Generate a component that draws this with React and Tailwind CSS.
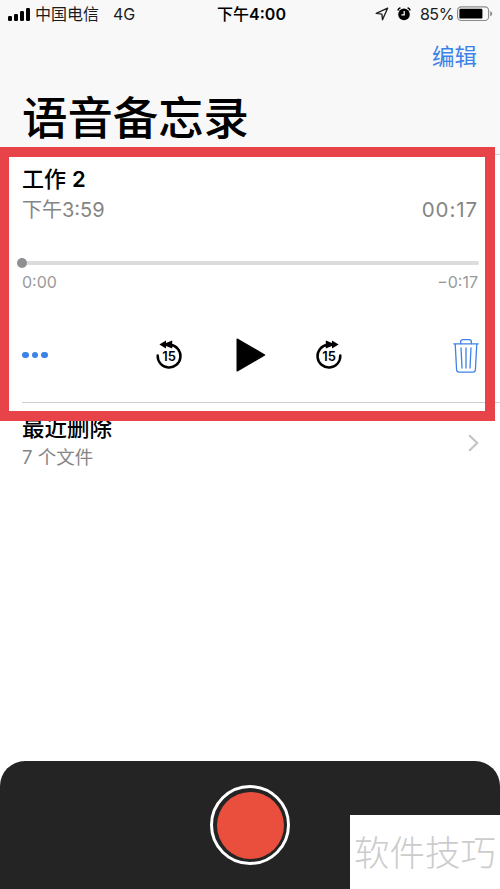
import React from 'react';

const SignalBars = () => (
  <svg width="22" height="14" viewBox="0 0 22 14" fill="#000">
    <rect x="0" y="9" width="4" height="5" rx="1.2" />
    <rect x="6" y="7" width="4" height="7" rx="1.2" />
    <rect x="12" y="4" width="4" height="10" rx="1.2" />
    <rect x="18" y="1" width="4" height="13" rx="1.2" />
  </svg>
);

const LocationIcon = () => (
  <svg width="14" height="14" viewBox="0 0 14 14" fill="none" stroke="#222" strokeWidth="1.4" strokeLinejoin="round">
    <path d="M12.6 1.2 1.2 6.4 6.9 7.1 7.5 12.8Z" />
  </svg>
);

const AlarmIcon = () => (
  <svg width="14" height="14" viewBox="0 0 14 14" fill="none">
    <circle cx="7" cy="7.4" r="5.8" fill="#000" />
    <path d="M.8 3.4A4 4 0 0 1 3.4 .8M13.2 3.4A4 4 0 0 0 10.6 .8" stroke="#000" strokeWidth="1.5" />
    <path d="M7.2 4v3.8H4.4" stroke="#fff" strokeWidth="1.2" />
  </svg>
);

const BatteryIcon = () => (
  <svg width="36" height="16" viewBox="0 0 36 16" fill="none">
    <rect x=".6" y=".9" width="31" height="13.6" rx="3.6" stroke="#8a8a8a" strokeWidth="1.1" />
    <rect x="2.4" y="2.8" width="23" height="9.8" rx="1.2" fill="#000" />
    <path d="M33.2 5.2c1.4.5 2 1.4 2 2.5s-.6 2-2 2.5Z" fill="#8a8a8a" />
  </svg>
);

const SkipIcon = ({ forward }) => (
  <svg width="32" height="32" viewBox="0 0 32 32" fill="none">
    <g transform={forward ? 'translate(32 0) scale(-1 1)' : undefined}>
      <path d="M4.7 16.6A11.4 11.4 0 1 0 17.4 5.8" stroke="#000" strokeWidth="2.5" strokeLinecap="round" />
      <path d="M6.4 5.4 13 1.4v2.5l6.2-2.5v8L13 6.9v2.5Z" fill="#000" />
    </g>
    <text x="16.2" y="21.6" textAnchor="middle" fontSize="13" fontWeight="600" fill="#000">15</text>
  </svg>
);

const PlayIcon = () => (
  <svg width="30" height="34" viewBox="0 0 30 34">
    <path d="M1.2 1.2 28.6 17 1.2 32.8Z" fill="#000" stroke="#000" strokeWidth="1.4" strokeLinejoin="round" />
  </svg>
);

const TrashIcon = () => (
  <svg width="26" height="36" viewBox="0 0 26 36" fill="none" stroke="#3d82e6" strokeWidth="1.3" strokeLinecap="round">
    <path d="M.8 5.8h24.4M2.2 5.8 3.6 31.8c.1 1.6 1 2.4 2.4 2.4h14c1.4 0 2.3-.8 2.4-2.4L23.8 5.8" />
    <path d="M7.6 5.6V4c0-1.5.9-2.3 2.3-2.3h6.2c1.4 0 2.3.8 2.3 2.3v1.6" />
    <path d="M8 9.8 9 30M13 9.8V30M18 9.8 17 30" />
  </svg>
);

const StatusBar = () => (
  <div className="flex h-7 items-center text-base text-[#1c1c1c]">
    <div className="flex flex-1 items-center pl-2">
      <SignalBars />
      <span className="ml-[5px]">中国电信</span>
      <span className="ml-[14px]">4G</span>
    </div>
    <span className="ml-0.5 font-medium text-black">下午<span className="font-semibold">4:00</span></span>
    <div className="flex flex-1 items-center justify-end pr-[7px]">
      <LocationIcon />
      <span className="ml-2"><AlarmIcon /></span>
      <span className="ml-[9px] mr-[3px] tracking-[-0.4px]">85%</span>
      <BatteryIcon />
    </div>
  </div>
);

const Recording = () => (
  <section className="ml-[22px] h-[248px] border-b border-[#cfcfd4] pr-[22px] pt-[9px]">
    <h2 className="text-[22px] font-medium leading-[30px] text-black">工作 <span className="font-semibold">2</span></h2>
    <div className="mt-px flex justify-between text-[20px] leading-[30px] text-[#858585]">
      <span>下午3:59</span>
      <span className="text-[20.5px] tracking-[0.9px]">00:17</span>
    </div>
    <div className="-ml-[5px] mt-[33px] flex h-[10px] items-center">
      <span className="size-[10px] rounded-full bg-[#8e8e93]" />
      <span className="-mr-px h-1 flex-1 rounded-r-full bg-[#dcdcdc]" />
    </div>
    <div className="mt-[3px] flex justify-between text-base leading-[22px] text-[#9a9a9a]">
      <span>0:00</span>
      <span>−0:17</span>
    </div>
    <div className="-mr-px mt-[44px] flex h-9 items-center">
      <div className="flex w-[131px] gap-[3px]">
        <span className="size-[6.5px] rounded-full bg-[#3d82e6]" />
        <span className="size-[6.5px] rounded-full bg-[#3d82e6]" />
        <span className="size-[6.5px] rounded-full bg-[#3d82e6]" />
      </div>
      <SkipIcon />
      <span className="ml-[51px] mr-[47px]"><PlayIcon /></span>
      <SkipIcon forward />
      <span className="ml-auto mt-[2px]"><TrashIcon /></span>
    </div>
  </section>
);

const App = () => (
  <div className="relative flex h-[889px] w-[500px] flex-col overflow-hidden bg-white font-['Inter','Noto_Sans_CJK_SC',sans-serif]">
    <header className="h-[155px] border-b border-[#cfcfd4] bg-[#f8f8f8]">
      <StatusBar />
      <div className="flex h-[57px] items-center justify-end pr-[23px] pt-px text-[22.5px] text-[#3d82e6]">编辑</div>
      <h1 className="pl-[22px] text-[45.4px] font-medium leading-[67px] text-black">语音备忘录</h1>
    </header>

    <main className="flex-1">
      <Recording />
      <section className="flex items-center justify-between pl-[22px] pr-[21px] pt-[9px]">
        <div>
          <h2 className="text-[22.5px] font-medium leading-[32px] text-black">最近删除</h2>
          <p className="text-[18.5px] leading-[26px] text-[#858585]">7 个文件</p>
        </div>
        <svg className="mt-[3px]" width="11" height="18" viewBox="0 0 11 18" fill="none" stroke="#c4c4c6" strokeWidth="2.2">
          <path d="M1.2 1.2 9.2 9 1.2 16.8" />
        </svg>
      </section>
    </main>

    <footer className="flex h-32 justify-center rounded-t-[25px] bg-[#242424] pt-6">
      <button className="flex size-20 items-center justify-center rounded-full border-[3px] border-white">
        <span className="size-[67px] rounded-full bg-[#ea4f3d]" />
      </button>
    </footer>

    <div className="absolute left-0 top-[147px] h-[274px] w-[495px] border-[10px] border-l-[9px] border-[#e9434a]" />
    <div className="absolute bottom-0 right-0 flex h-[74px] w-[150px] items-center justify-center bg-white pt-[3px] text-[35.5px] font-light text-[#cccccc]">
      软件技巧
    </div>
  </div>
);

export default App;
